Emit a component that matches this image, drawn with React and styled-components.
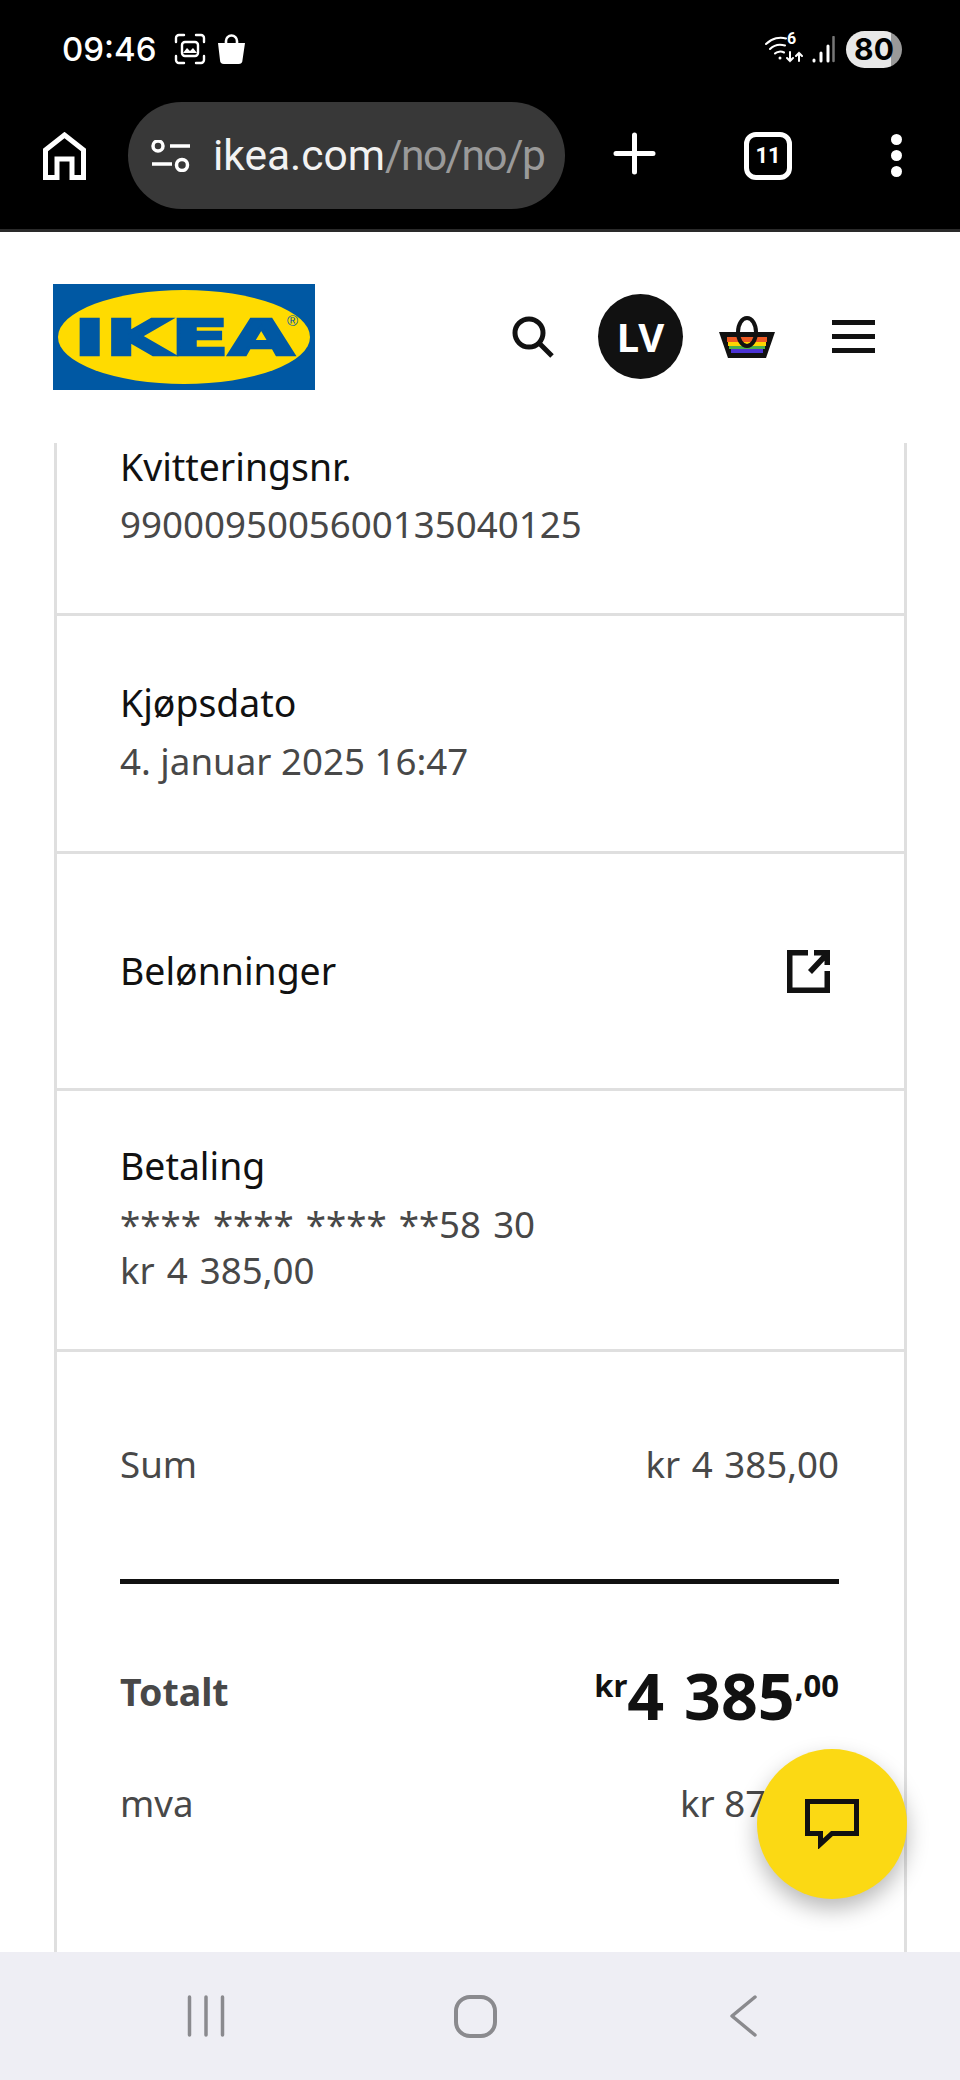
import React from 'react'
import styled, { createGlobalStyle } from 'styled-components'

const Global = createGlobalStyle`
  html, body { margin: 0; padding: 0; background: #fff; }
  * { box-sizing: border-box; }
`

const Row = ({ label, children, top, bottom, gap = 12 }) => (
  <InfoRow $top={top} $bottom={bottom}>
    <Label $gap={gap}>{label}</Label>
    {children}
  </InfoRow>
)

const App = () => {
  return (
    <>
      <Global />
      <Page>
        <StatusBar>
          <Time>09:46</Time>
          <StatusIcon $ml={17} width="32" height="32" viewBox="0 0 32 32" fill="none" stroke="#fff" strokeWidth="2.4" strokeLinecap="round">
            <path d="M2 9V5a3 3 0 0 1 3-3h5M22 2h5a3 3 0 0 1 3 3v4M30 23v4a3 3 0 0 1-3 3h-5M10 30H5a3 3 0 0 1-3-3v-4" />
            <rect x="8" y="9" width="16" height="14" rx="3" />
            <path d="M9 20l4-5 3 3 3-3 4 5z" fill="#fff" stroke="none" />
          </StatusIcon>
          <StatusIcon $ml={11} width="29" height="30" viewBox="0 0 29 30" fill="none">
            <path d="M9 10V7a5.500 5.500 0 0 1 11 0v3" stroke="#fff" strokeWidth="2.600" />
            <path d="M1 9h27l-2.500 17a4 4 0 0 1-4 4h-14.500a4 4 0 0 1-4-4z" fill="#fff" />
          </StatusIcon>
          <StatusRight>
            <StatusIcon width="38" height="28" viewBox="0 0 38 28" fill="none" stroke="#fff" strokeWidth="2" strokeLinecap="round">
              <path d="M1 9c6-6 14-7.500 20-5.500M5 14c4-4 10-5 15-3.500M10 18.500c2-2 6-2.500 9-1" />
              <circle cx="15" cy="23" r="1.500" fill="#fff" stroke="none" />
              <path d="M25 17v9M22 23l3 3 3-3M34 26v-8M31 21l3-3 3 3" />
            </StatusIcon>
            <SmallSix>6</SmallSix>
            <StatusIcon $ml={9} width="23" height="27" viewBox="0 0 23 27" fill="none" strokeLinecap="round">
              <path d="M2 24v1M9 17v8M16 10v15" stroke="#fff" strokeWidth="3" />
              <path d="M21.500 1v24" stroke="#777" strokeWidth="2.500" />
            </StatusIcon>
            <Battery>80</Battery>
          </StatusRight>
        </StatusBar>

        <BrowserBar>
          <BarIcon $ml={43} width="43" height="48" viewBox="0 0 43 48" fill="none" stroke="#fff" strokeWidth="5">
            <path d="M2.500 45.500V18L21.500 3l19 15v27.500H29V27H14v18.500z" />
          </BarIcon>
          <UrlPill>
            <UrlIcon width="40" height="32" viewBox="0 0 40 32" fill="none" stroke="#fff" strokeWidth="3.500">
              <circle cx="7" cy="6" r="5" />
              <circle cx="31" cy="25" r="5.500" />
              <path d="M19 6h20M1 24h20" />
            </UrlIcon>
            <UrlText>ikea.com<UrlPath>/no/no/p</UrlPath></UrlText>
          </UrlPill>
          <BarIcon $ml={48} width="43" height="43" viewBox="0 0 43 43" fill="none" stroke="#fff" strokeWidth="5" strokeLinecap="round">
            <path d="M21.500 3v37M3 21.500h37" />
          </BarIcon>
          <TabCount>11</TabCount>
          <MenuDots><i /><i /><i /></MenuDots>
        </BrowserBar>

        <SiteHeader>
          <svg width="262" height="106" viewBox="0 0 262 106">
            <rect width="262" height="106" fill="#0058a3" />
            <ellipse cx="131" cy="53" rx="126" ry="47" fill="#ffdb00" />
            <LogoWord x="21" y="71" fontSize="50" textLength="220" lengthAdjust="spacingAndGlyphs">IKEA</LogoWord>
            <LogoMark x="234" y="42" fontSize="15">®</LogoMark>
          </svg>
          <HeaderTools>
            <svg width="42" height="42" viewBox="0 0 42 42" fill="none" stroke="#111" strokeWidth="5">
              <circle cx="17" cy="17" r="14" />
              <path d="M27 27l13 13" />
            </svg>
            <Avatar>LV</Avatar>
            <svg width="56" height="42" viewBox="0 0 56 42">
              <path d="M0 16h56l-9 26H9z" fill="#111" />
              <rect x="8" y="21" width="40" height="5" fill="#ee5a24" />
              <rect x="9" y="26" width="38" height="4" fill="#ffd500" />
              <rect x="10" y="30" width="36" height="3" fill="#4cb04a" />
              <rect x="12" y="33" width="32" height="4" fill="#4a32d4" />
              <ellipse cx="28" cy="16" rx="9" ry="14" fill="none" stroke="#111" strokeWidth="4" />
            </svg>
            <Burger><i /><i /><i /></Burger>
          </HeaderTools>
        </SiteHeader>

        <Scroller>
          <Panel>
            <Row label="Kvitteringsnr." top={1} bottom={66} gap={11}>
              <Value>9900095005600135040125</Value>
            </Row>
            <Row label="Kjøpsdato" top={64} bottom={67}>
              <Value>4. januar 2025 16:47</Value>
            </Row>
            <LinkRow>
              <RowText>Belønninger</RowText>
              <LinkIcon width="43" height="43" viewBox="0 0 43 43" fill="none" stroke="#111" strokeWidth="5.500">
                <path d="M21 2.750H2.750v37.500h37.500V21" />
                <path d="M23 22L39 5M27 2.750h13.250V15" />
              </LinkIcon>
            </LinkRow>
            <Row label="Betaling" top={52} bottom={56}>
              <Value $wide>**** **** **** **58 30</Value>
              <Value $wide>kr 4 385,00</Value>
            </Row>
            <Summary>
              <SumLine>
                <Muted>Sum</Muted>
                <Muted $wide>kr 4 385,00</Muted>
              </SumLine>
              <Divider />
              <TotalLine>
                <TotalLabel>Totalt</TotalLabel>
                <Price>
                  <PriceSmall>kr</PriceSmall>
                  <PriceBig>4 385</PriceBig>
                  <PriceSmall>,00</PriceSmall>
                </Price>
              </TotalLine>
              <VatLine>
                <Muted>mva</Muted>
                <Muted>kr 877,00</Muted>
              </VatLine>
            </Summary>
          </Panel>
        </Scroller>

        <NavBar>
          <svg width="38" height="42" viewBox="0 0 38 42" stroke="#8a8a8e" strokeWidth="3.500" strokeLinecap="round">
            <path d="M2.500 2v38M19 2v38M35.500 2v38" />
          </svg>
          <HomeKey width="43" height="43" viewBox="0 0 43 43" fill="none" stroke="#8a8a8e" strokeWidth="4">
            <rect x="2" y="2" width="39" height="39" rx="14" />
          </HomeKey>
          <svg width="29" height="42" viewBox="0 0 29 42" fill="none" stroke="#8a8a8e" strokeWidth="3.500" strokeLinecap="round" strokeLinejoin="round">
            <path d="M26 2L3 21l23 19" />
          </svg>
        </NavBar>

        <ChatButton>
          <svg width="54" height="50" viewBox="0 0 54 50" fill="none" stroke="#111" strokeWidth="5">
            <path d="M2.500 2.500h49v32H27L15.500 45V34.500H2.500z" />
          </svg>
        </ChatButton>
      </Page>
    </>
  )
}

const Page = styled.div`
  position: relative;
  width: 960px;
  height: 2080px;
  display: flex;
  flex-direction: column;
  overflow: hidden;
  background: #fff;
  font-family: "Noto Sans", sans-serif;
`

const StatusBar = styled.div`
  height: 102px;
  flex: none;
  background: #000;
  display: flex;
  align-items: center;
  padding: 0 58px 4px 62px;
`

const Time = styled.span`
  font-family: Inter, Roboto, sans-serif;
  font-weight: 500;
  font-size: 33px;
  color: #fff;
`

const StatusIcon = styled.svg`
  flex: none;
  margin-left: ${(p) => p.$ml || 0}px;
`

const StatusRight = styled.div`
  position: relative;
  margin-left: auto;
  display: flex;
  align-items: center;
`

const SmallSix = styled.span`
  position: absolute;
  left: 22px;
  top: -2px;
  font: 700 16px Roboto, sans-serif;
  color: #fff;
`

const Battery = styled.span`
  width: 56px;
  height: 37px;
  margin-left: 11px;
  border-radius: 19px;
  background: linear-gradient(90deg, #e8e8e8 80%, #999 80%);
  color: #000;
  font: 700 30px/37px Inter, Roboto, sans-serif;
  text-align: center;
`

const BrowserBar = styled.div`
  height: 130px;
  flex: none;
  background: #000;
  border-bottom: 3px solid #2a2a2a;
  display: flex;
  align-items: flex-start;
`

const BarIcon = styled.svg`
  flex: none;
  margin-left: ${(p) => p.$ml}px;
  margin-top: 30px;
`

const UrlPill = styled.div`
  width: 437px;
  height: 107px;
  margin-left: 42px;
  border-radius: 54px;
  background: #383838;
  display: flex;
  align-items: center;
  gap: 22px;
  padding: 0 23px;
`

const UrlIcon = styled.svg`
  flex: none;
`

const UrlText = styled.span`
  font: 400 42.500px Roboto, sans-serif;
  color: #f2f2f2;
  white-space: nowrap;
`

const UrlPath = styled.span`
  color: #9a9a9a;
  letter-spacing: -1.600px;
`

const TabCount = styled.span`
  width: 48px;
  height: 48px;
  margin: 30px 0 0 88px;
  border: 5px solid #fff;
  border-radius: 12px;
  color: #fff;
  font: 700 22px/38px Roboto, sans-serif;
  text-align: center;
`

const MenuDots = styled.div`
  margin: 32px 0 0 99px;
  display: flex;
  flex-direction: column;
  gap: 5px;

  i {
    width: 11px;
    height: 11px;
    border-radius: 50%;
    background: #fff;
  }
`

const SiteHeader = styled.header`
  height: 211px;
  flex: none;
  display: flex;
  align-items: center;
  padding: 0 85px 2px 53px;
`

const LogoWord = styled.text`
  font-family: "DejaVu Sans", sans-serif;
  font-weight: 700;
  fill: #0058a3;
  stroke: #0058a3;
  stroke-width: 2.500px;
`

const LogoMark = styled.text`
  font-family: "Liberation Sans", sans-serif;
  fill: #0058a3;
`

const HeaderTools = styled.div`
  margin-left: auto;
  display: flex;
  align-items: center;
`

const Avatar = styled.div`
  width: 85px;
  height: 85px;
  margin: 0 36px 0 44px;
  border-radius: 50%;
  background: #111;
  color: #fff;
  font-weight: 700;
  font-size: 40px;
  line-height: 85px;
  text-align: center;
`

const Burger = styled.div`
  width: 43px;
  margin-left: 57px;
  display: flex;
  flex-direction: column;
  gap: 9px;

  i {
    height: 5px;
    background: #111;
  }
`

const Scroller = styled.main`
  flex: 1;
  min-height: 0;
  overflow: hidden;
  padding: 0 53px 0 54px;
`

const Panel = styled.div`
  min-height: 100%;
  border-left: 3px solid #dfdfdf;
  border-right: 3px solid #dfdfdf;
`

const InfoRow = styled.section`
  padding: ${(p) => p.$top}px 65px ${(p) => p.$bottom}px 63px;
  border-bottom: 3px solid #dfdfdf;
`

const LinkRow = styled.section`
  height: 237px;
  padding: 0 74px 0 63px;
  border-bottom: 3px solid #dfdfdf;
  display: flex;
  align-items: center;
  justify-content: space-between;
`

const LinkIcon = styled.svg`
  flex: none;
`

const RowText = styled.span`
  font-size: 37.400px;
  line-height: 46px;
  color: #111;
`

const Label = styled(RowText)`
  display: block;
  margin-bottom: ${(p) => p.$gap}px;
`

const Value = styled.div`
  font-size: 36.700px;
  line-height: 46px;
  color: #484848;
  word-spacing: ${(p) => (p.$wide ? '2.5px' : '0')};
`

const Summary = styled.section`
  padding: 0 65px 0 63px;
`

const SumLine = styled.div`
  display: flex;
  justify-content: space-between;
  padding-top: 89px;
`

const Muted = styled.span`
  font-size: 36.700px;
  line-height: 46px;
  color: #484848;
  white-space: nowrap;
  word-spacing: ${(p) => (p.$wide ? '2px' : '0')};
`

const Divider = styled.div`
  height: 5px;
  margin-top: 92px;
  background: #111;
`

const TotalLine = styled.div`
  display: flex;
  justify-content: space-between;
  align-items: center;
  height: 80px;
  margin-top: 67px;
`

const TotalLabel = styled.span`
  font-size: 37.500px;
  font-weight: 700;
  color: #484848;
`

const Price = styled.div`
  display: flex;
  align-items: flex-start;
  color: #111;
  font-weight: 700;
`

const PriceBig = styled.span`
  font-size: 64.500px;
  line-height: 80px;
  margin-top: 7px;
  word-spacing: 3px;
`

const PriceSmall = styled.span`
  font-size: 31px;
  line-height: 40px;
  margin-top: 17px;
`

const VatLine = styled.div`
  display: flex;
  justify-content: space-between;
  margin-top: 49px;
`

const NavBar = styled.nav`
  height: 128px;
  flex: none;
  background: #eeeef4;
  display: flex;
  align-items: center;
  padding: 0 202px 0 187px;
  justify-content: space-between;
`

const HomeKey = styled.svg`
  margin-right: 4px;
`

const ChatButton = styled.button`
  position: absolute;
  left: 757px;
  top: 1749px;
  width: 150px;
  height: 150px;
  padding: 0;
  border: 0;
  border-radius: 50%;
  background: #fbd914;
  box-shadow: 0 10px 22px rgba(0, 0, 0, 0.28);
  display: flex;
  align-items: center;
  justify-content: center;
`

export default App
